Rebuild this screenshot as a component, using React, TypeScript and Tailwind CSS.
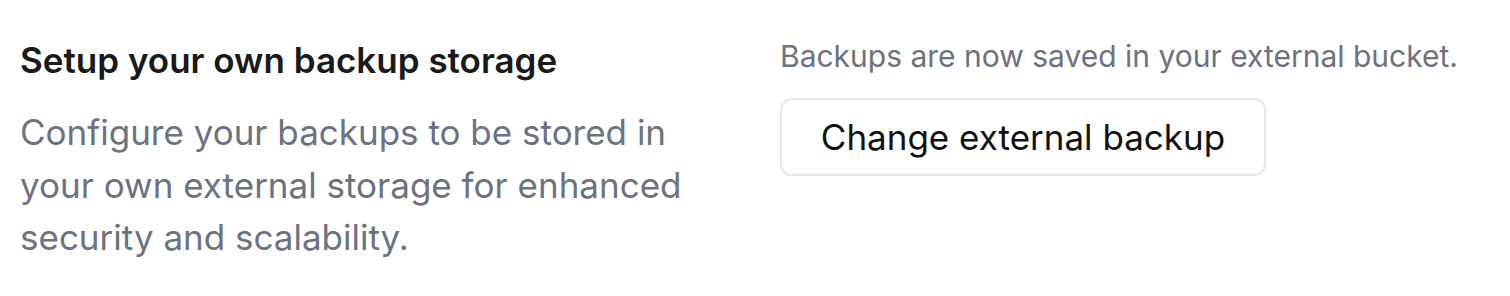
export default function App() {
  return (
    <div className="w-[1510px] h-[296px] bg-white flex" style={{ fontFamily: "Inter, 'Noto Sans', sans-serif" }}>
      <div className="w-[760px] pl-[20px] pt-[34px]">
        <h2 className="text-[35px] leading-[52px] font-semibold text-[#1a1a1a]">Setup your own backup storage</h2>
        <p className="mt-[20px] w-[690px] text-[35px] leading-[52.5px] text-[#6b7280]">
          Configure your backups to be stored in your own external storage for enhanced security and scalability.
        </p>
      </div>
      <div className="pl-[20px] pt-[34px] flex flex-col items-start">
        <p className="text-[30px] leading-[44px] text-[#6b7280]">Backups are now saved in your external bucket.</p>
        <button className="mt-[20px] h-[78px] w-[486px] rounded-[12px] border-2 border-[#e5e7eb] bg-white text-[35px] text-[#111111] flex items-center justify-center">
          Change external backup
        </button>
      </div>
    </div>
  );
}
